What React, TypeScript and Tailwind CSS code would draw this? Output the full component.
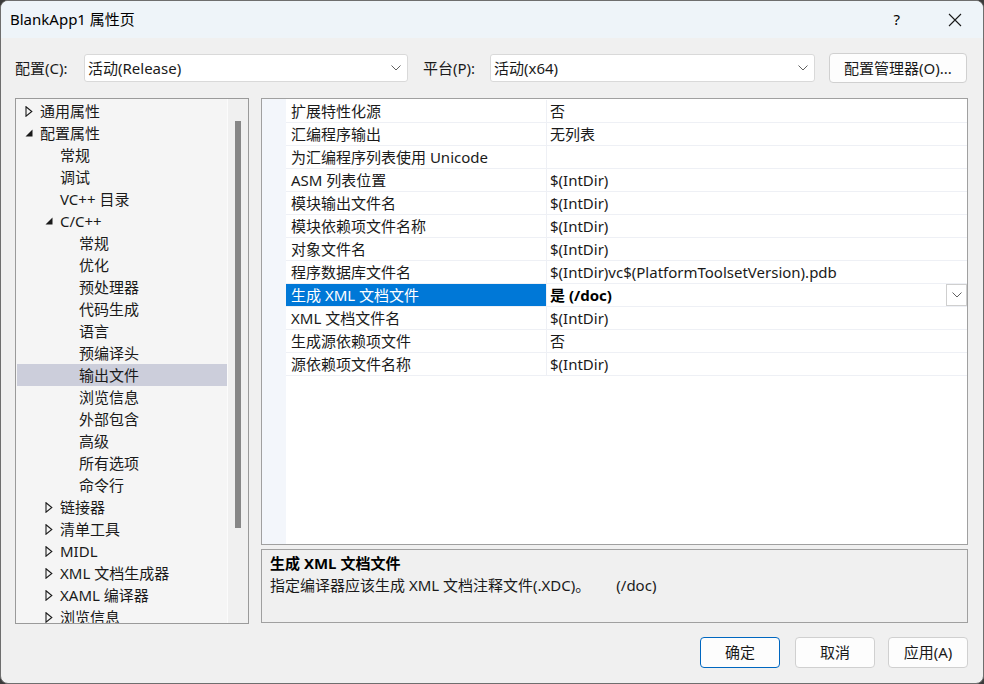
import React from "react";

const FONT = { fontFamily: '"Noto Sans", "Noto Sans CJK SC", sans-serif' };

function Chevron({ className = "" }: { className?: string }) {
  return (
    <svg width="10" height="6" viewBox="0 0 10 6" className={className}>
      <path d="M0.5 0.5 L5 5 L9.5 0.5" fill="none" stroke="#606060" strokeWidth="1" />
    </svg>
  );
}

function Collapsed() {
  return (
    <svg width="8" height="11" viewBox="0 0 8 11">
      <path d="M1 0.8 L6.8 5.5 L1 10.2 Z" fill="none" stroke="#1a1a1a" strokeWidth="1.1" />
    </svg>
  );
}

function Expanded() {
  return (
    <svg width="8" height="8" viewBox="0 0 8 8">
      <path d="M7.5 0.5 L7.5 7.5 L0.5 7.5 Z" fill="#1a1a1a" />
    </svg>
  );
}

type TreeItem = { label: string; level: number; icon?: "c" | "e"; selected?: boolean };

const tree: TreeItem[] = [
  { label: "通用属性", level: 0, icon: "c" },
  { label: "配置属性", level: 0, icon: "e" },
  { label: "常规", level: 1 },
  { label: "调试", level: 1 },
  { label: "VC++ 目录", level: 1 },
  { label: "C/C++", level: 1, icon: "e" },
  { label: "常规", level: 2 },
  { label: "优化", level: 2 },
  { label: "预处理器", level: 2 },
  { label: "代码生成", level: 2 },
  { label: "语言", level: 2 },
  { label: "预编译头", level: 2 },
  { label: "输出文件", level: 2, selected: true },
  { label: "浏览信息", level: 2 },
  { label: "外部包含", level: 2 },
  { label: "高级", level: 2 },
  { label: "所有选项", level: 2 },
  { label: "命令行", level: 2 },
  { label: "链接器", level: 1, icon: "c" },
  { label: "清单工具", level: 1, icon: "c" },
  { label: "MIDL", level: 1, icon: "c" },
  { label: "XML 文档生成器", level: 1, icon: "c" },
  { label: "XAML 编译器", level: 1, icon: "c" },
  { label: "浏览信息", level: 1, icon: "c" },
];

const props: { name: string; value: string; selected?: boolean }[] = [
  { name: "扩展特性化源", value: "否" },
  { name: "汇编程序输出", value: "无列表" },
  { name: "为汇编程序列表使用 Unicode", value: "" },
  { name: "ASM 列表位置", value: "$(IntDir)" },
  { name: "模块输出文件名", value: "$(IntDir)" },
  { name: "模块依赖项文件名称", value: "$(IntDir)" },
  { name: "对象文件名", value: "$(IntDir)" },
  { name: "程序数据库文件名", value: "$(IntDir)vc$(PlatformToolsetVersion).pdb" },
  { name: "生成 XML 文档文件", value: "是 (/doc)", selected: true },
  { name: "XML 文档文件名", value: "$(IntDir)" },
  { name: "生成源依赖项文件", value: "否" },
  { name: "源依赖项文件名称", value: "$(IntDir)" },
];

function TreeRow({ item }: { item: TreeItem }) {
  const textLeft = item.level === 0 ? "pl-[23px]" : item.level === 1 ? "pl-[43px]" : "pl-[62px]";
  const iconLeft = item.level === 0 ? "left-[8px]" : "left-[28px]";
  return (
    <div
      className={`relative h-[22px] flex items-center ${textLeft} ${
        item.selected ? "bg-[#cccedb]" : ""
      }`}
    >
      {item.icon && (
        <span className={`absolute ${iconLeft} top-0 h-[22px] flex items-center`}>
          {item.icon === "c" ? <Collapsed /> : <Expanded />}
        </span>
      )}
      <span className="whitespace-nowrap">{item.label}</span>
    </div>
  );
}

export default function App() {
  return (
    <div className="w-[984px] h-[684px] bg-[#3b3b3b] text-[15px] text-[#1a1a1a]" style={FONT}>
      <div className="w-full h-full rounded-[8px] border border-[#6e6e6e] overflow-hidden flex flex-col bg-[#f0f0f0]">
        {/* Title bar */}
        <div className="h-[37px] shrink-0 bg-[#eef4f9] flex items-center pl-[9px]">
          <span className="text-[15px] text-black">BlankApp1 属性页</span>
          <span className="ml-auto mr-[48px] text-[15px] text-black">?</span>
          <span className="mr-[21px] flex items-center">
            <svg width="14" height="14" viewBox="0 0 14 14">
              <path d="M1 1 L13 13 M13 1 L1 13" stroke="#1a1a1a" strokeWidth="1.1" />
            </svg>
          </span>
        </div>

        {/* Body */}
        <div className="flex-1 flex flex-col pl-[14px] pr-[15px]">
          {/* Config row */}
          <div className="mt-[15px] h-[30px] flex items-center">
            <span className="w-[69px] whitespace-nowrap">配置(C):</span>
            <div className="w-[324px] h-[28px] bg-white border border-[#d9d9d9] rounded-[3px] flex items-center pl-[3px] pr-[6px]">
              <span>活动(Release)</span>
              <Chevron className="ml-auto" />
            </div>
            <span className="ml-[15px] w-[67px] whitespace-nowrap">平台(P):</span>
            <div className="w-[325px] h-[28px] bg-white border border-[#d9d9d9] rounded-[3px] flex items-center pl-[3px] pr-[6px]">
              <span>活动(x64)</span>
              <Chevron className="ml-auto" />
            </div>
            <div className="ml-[14px] w-[138px] h-[30px] bg-[#fdfdfd] border border-[#d0d0d0] rounded-[4px] flex items-center justify-center">
              配置管理器(O)...
            </div>
          </div>

          {/* Main */}
          <div className="mt-[15px] h-[526px] flex">
            {/* Tree */}
            <div className="w-[234px] h-full border border-[#9a9a9a] bg-[#f5f5f5] flex">
              <div className="flex-1 pt-[1px] pl-[1px] overflow-hidden">
                {tree.map((t, i) => (
                  <TreeRow key={i} item={t} />
                ))}
              </div>
              <div className="w-[21px] h-full border-l border-[#fbfbfb] bg-[#f0f0f0] pt-[22px] flex justify-center">
                <div className="w-[6px] h-[407px] bg-[#878787]" />
              </div>
            </div>

            {/* Right column */}
            <div className="ml-[12px] flex-1 flex flex-col">
              <div className="h-[447px] border border-[#a0a0a0] bg-white flex">
                <div className="w-[24px] bg-[#f3f6fb]" />
                <div className="flex-1 pt-[1px]">
                  {props.map((p, i) => (
                    <div key={i} className="h-[23px] flex border-b border-[#eef0f5]">
                      <div
                        className={`w-[260px] flex items-center pl-[5px] whitespace-nowrap ${
                          p.selected ? "bg-[#0078d7] text-white" : ""
                        }`}
                      >
                        {p.name}
                      </div>
                      <div className="flex-1 border-l border-[#eef0f5] flex items-center pl-[3px] whitespace-nowrap">
                        <span className={p.selected ? "font-bold text-black" : ""}>{p.value}</span>
                        {p.selected && (
                          <div className="ml-auto w-[21px] h-[22px] bg-white border border-[#cfcfcf] flex items-center justify-center">
                            <Chevron />
                          </div>
                        )}
                      </div>
                    </div>
                  ))}
                </div>
              </div>
              <div className="mt-[4px] h-[74px] border border-[#a0a0a0] bg-[#f0f0f0] pl-[8px] pt-[2px]">
                <div className="h-[22px] flex items-center font-bold text-black">生成 XML 文档文件</div>
                <div className="h-[23px] flex items-center whitespace-nowrap">
                  <span>指定编译器应该生成 XML 文档注释文件(.XDC)。</span>
                  <span className="ml-[26px]">(/doc)</span>
                </div>
              </div>
            </div>
          </div>

          {/* Buttons */}
          <div className="mt-[13px] flex justify-end">
            <div className="w-[80px] h-[31px] bg-[#fdfdfd] border border-[#0067c0] rounded-[4px] flex items-center justify-center">
              确定
            </div>
            <div className="ml-[15px] w-[80px] h-[31px] bg-[#fdfdfd] border border-[#d0d0d0] rounded-[4px] flex items-center justify-center">
              取消
            </div>
            <div className="ml-[13px] w-[80px] h-[31px] bg-[#fdfdfd] border border-[#d0d0d0] rounded-[4px] flex items-center justify-center">
              应用(A)
            </div>
          </div>
        </div>
      </div>
    </div>
  );
}
